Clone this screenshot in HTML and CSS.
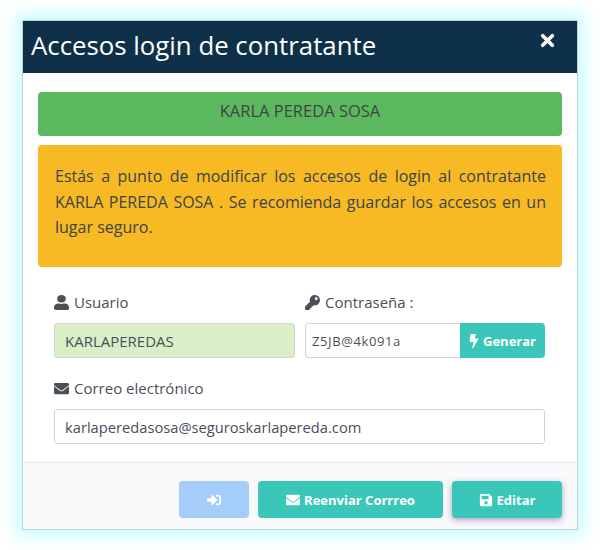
FILE: index.html
```html
<!DOCTYPE html>
<html lang="es">
<head>
<meta charset="UTF-8">
<meta name="viewport" content="width=device-width, initial-scale=1.0">
<title>Accesos login de contratante</title>
<link rel="stylesheet" href="styles.css">
</head>
<body>
<div class="modal">
<div class="modal-header">
<h2>Accesos login de contratante</h2>
<svg class="cerrar" viewBox="0 0 14 14"><path d="M2.5 2.5l9 9M11.500 2.500l-9 9" stroke="#fff" stroke-width="3.400" stroke-linecap="round"/></svg>
</div>
<div class="modal-body">
<div class="alerta verde">KARLA PEREDA SOSA</div>
<div class="alerta naranja">Estás a punto de modificar los accesos de login al contratante KARLA PEREDA SOSA . Se recomienda guardar los accesos en un lugar seguro.</div>
<div class="campos">
<div class="campo">
<label>
<svg class="icono" viewBox="0 0 448 512" preserveAspectRatio="none"><path d="M224 256a128 128 0 1 0 0-256 128 128 0 0 0 0 256zm90 32h-17a174 174 0 0 1-146 0h-17A134 134 0 0 0 0 422v42a48 48 0 0 0 48 48h352a48 48 0 0 0 48-48v-42a134 134 0 0 0-134-134z"/></svg>
Usuario</label>
<input class="entrada usuario" type="text" value="KARLAPEREDAS">
</div>
<div class="campo">
<label>
<svg class="icono" viewBox="0 0 512 512"><path d="M512 176a176 176 0 0 1-209 173l-24 27a24 24 0 0 1-18 8h-37v40a24 24 0 0 1-24 24h-40v40a24 24 0 0 1-24 24H24a24 24 0 0 1-24-24v-78a24 24 0 0 1 7-17l162-162A176 176 0 1 1 512 176zm-176-48a48 48 0 1 0 96 0 48 48 0 0 0-96 0z"/></svg>
Contraseña :</label>
<div class="grupo">
<input class="entrada clave" type="text" value="Z5JB@4k091a">
<button class="boton generar">
<svg class="icono-btn rayo" viewBox="0 0 320 512"><path d="M296 160H180l43-131c4-15-8-29-23-29H56C44 0 34 9 32 21L0 261c-2 14 9 27 24 27h119l-46 195c-4 15 8 29 23 29 8 0 16-4 21-12l176-304c9-16-2-36-21-36z"/></svg>
Generar</button>
</div>
</div>
<div class="campo ancho">
<label>
<svg class="icono" viewBox="0 0 512 512"><path d="M502 191c4-3 10 0 10 5v204a48 48 0 0 1-48 48H48a48 48 0 0 1-48-48V196c0-5 6-8 10-5 22 17 52 39 154 113 21 15 57 48 92 48s72-33 92-48c102-74 132-96 154-113zM256 320c23 0 57-29 74-41 133-97 143-105 174-129 6-5 8-12 8-19v-19a48 48 0 0 0-48-48H48a48 48 0 0 0-48 48v19c0 7 2 14 8 19 31 24 41 32 174 129 17 12 51 41 74 41z"/></svg>
Correo electrónico</label>
<input class="entrada" type="text" value="karlaperedasosa@seguroskarlapereda.com">
</div>
</div>
</div>
<div class="modal-footer">
<button class="boton claro">
<svg class="icono-btn" viewBox="0 0 512 512"><path d="M416 448h-84c-7 0-12-5-12-12v-40c0-7 5-12 12-12h84c18 0 32-14 32-32V160c0-18-14-32-32-32h-84c-7 0-12-5-12-12V76c0-7 5-12 12-12h84c53 0 96 43 96 96v192c0 53-43 96-96 96zm-47-201L201 79c-15-15-41-4-41 17v96H24c-13 0-24 11-24 24v80c0 13 11 24 24 24h136v96c0 21 26 32 41 17l168-168c9-10 9-24 0-34z"/></svg>
</button>
<button class="boton reenviar">
<svg class="icono-btn" viewBox="0 0 512 512"><path d="M502 191c4-3 10 0 10 5v204a48 48 0 0 1-48 48H48a48 48 0 0 1-48-48V196c0-5 6-8 10-5 22 17 52 39 154 113 21 15 57 48 92 48s72-33 92-48c102-74 132-96 154-113zM256 320c23 0 57-29 74-41 133-97 143-105 174-129 6-5 8-12 8-19v-19a48 48 0 0 0-48-48H48a48 48 0 0 0-48 48v19c0 7 2 14 8 19 31 24 41 32 174 129 17 12 51 41 74 41z"/></svg>
Reenviar Corrreo</button>
<button class="boton editar">
<svg class="icono-btn" viewBox="0 0 448 512"><path d="M433 129l-84-84a48 48 0 0 0-34-13H48A48 48 0 0 0 0 80v352a48 48 0 0 0 48 48h352a48 48 0 0 0 48-48V163a48 48 0 0 0-15-34zM224 416a64 64 0 1 1 0-128 64 64 0 0 1 0 128zm96-304v100c0 7-5 12-12 12H76c-7 0-12-5-12-12V108c0-7 5-12 12-12h228c3 0 6 1 8 4l4 4c3 2 4 5 4 8z"/></svg>
Editar</button>
</div>
</div>
</body>
</html>
```

FILE: styles.css
```css
* {
  box-sizing: border-box;
}

body {
  margin: 0;
  height: 550px;
  overflow: hidden;
  background-color: #fff;
  font-family: "Open Sans", "Noto Sans", sans-serif;
  color: #3e4651;
  padding: 20px 22px;
}

.modal {
  width: 556px;
  height: 510px;
  display: flex;
  flex-direction: column;
  background-color: #fff;
  border: 1px solid #c4ced3;
  box-shadow: 0 0 15px 6px #c6fcff;
}

.modal-header {
  height: 52px;
  flex: none;
  background-color: #0e3149;
  color: #fff;
  display: flex;
  justify-content: space-between;
  padding: 0 22px 0 8px;
}

.modal-header h2 {
  margin: 0;
  font-size: 25.800px;
  font-weight: 400;
  line-height: 49px;
}

.cerrar {
  width: 15px;
  height: 15px;
  margin-top: 12px;
}

.modal-body {
  flex: 1;
  padding: 19px 15px 0;
}

.alerta {
  border-radius: 4px;
  font-size: 16px;
  color: #3c4446;
}

.verde {
  height: 44px;
  line-height: 37px;
  font-size: 16.500px;
  text-align: center;
  background-color: #5cb85f;
}

.naranja {
  height: 122px;
  margin-top: 9px;
  padding: 19px 16px 0 17px;
  line-height: 25.500px;
  text-align: justify;
  background-color: #f7b924;
}

.campos {
  display: grid;
  grid-template-columns: 241px 240px;
  column-gap: 10px;
  row-gap: 19px;
  padding: 24px 16px 0;
}

.ancho {
  grid-column: 1 / 3;
}

.campo label {
  display: flex;
  align-items: center;
  gap: 5px;
  height: 22px;
  margin-bottom: 10px;
  font-size: 15px;
  color: #495057;
}

.icono {
  width: 15px;
  height: 15px;
  fill: #495057;
}

.entrada {
  display: block;
  width: 100%;
  height: 35px;
  padding: 0 10px;
  border: 1px solid #ced4da;
  border-radius: 3px;
  background-color: #fff;
  font-family: inherit;
  font-size: 14.700px;
  color: #495057;
}

.usuario {
  background-color: #d9efc7;
  font-size: 15px;
}

.grupo {
  display: flex;
}

.clave {
  flex: 1;
  min-width: 0;
  padding: 0 6px;
  font-size: 13px;
  letter-spacing: 0.600px;
  border-right: 0;
  border-radius: 4px 0 0 4px;
}

.boton {
  display: flex;
  align-items: center;
  justify-content: center;
  gap: 4px;
  height: 37px;
  padding: 0;
  border: 0;
  border-radius: 4px;
  background-color: #3ac7b9;
  color: #fff;
  font-family: inherit;
  font-size: 13px;
  font-weight: 700;
}

.generar {
  width: 85px;
  height: 35px;
  border-radius: 0 4px 4px 0;
}

.icono-btn {
  width: 14px;
  height: 14px;
  fill: #fff;
}

.rayo {
  width: 10px;
}

.modal-footer {
  height: 67px;
  flex: none;
  display: flex;
  justify-content: flex-end;
  gap: 9px;
  padding: 18px 15px 0 0;
  background-color: #f8f9fb;
  border-top: 1px solid #e6e8ec;
}

.claro {
  width: 70px;
  background-color: #a5cdfa;
}

.reenviar {
  width: 185px;
}

.editar {
  width: 110px;
  box-shadow: 0 2px 6px rgba(90, 50, 120, 0.450);
}
```
